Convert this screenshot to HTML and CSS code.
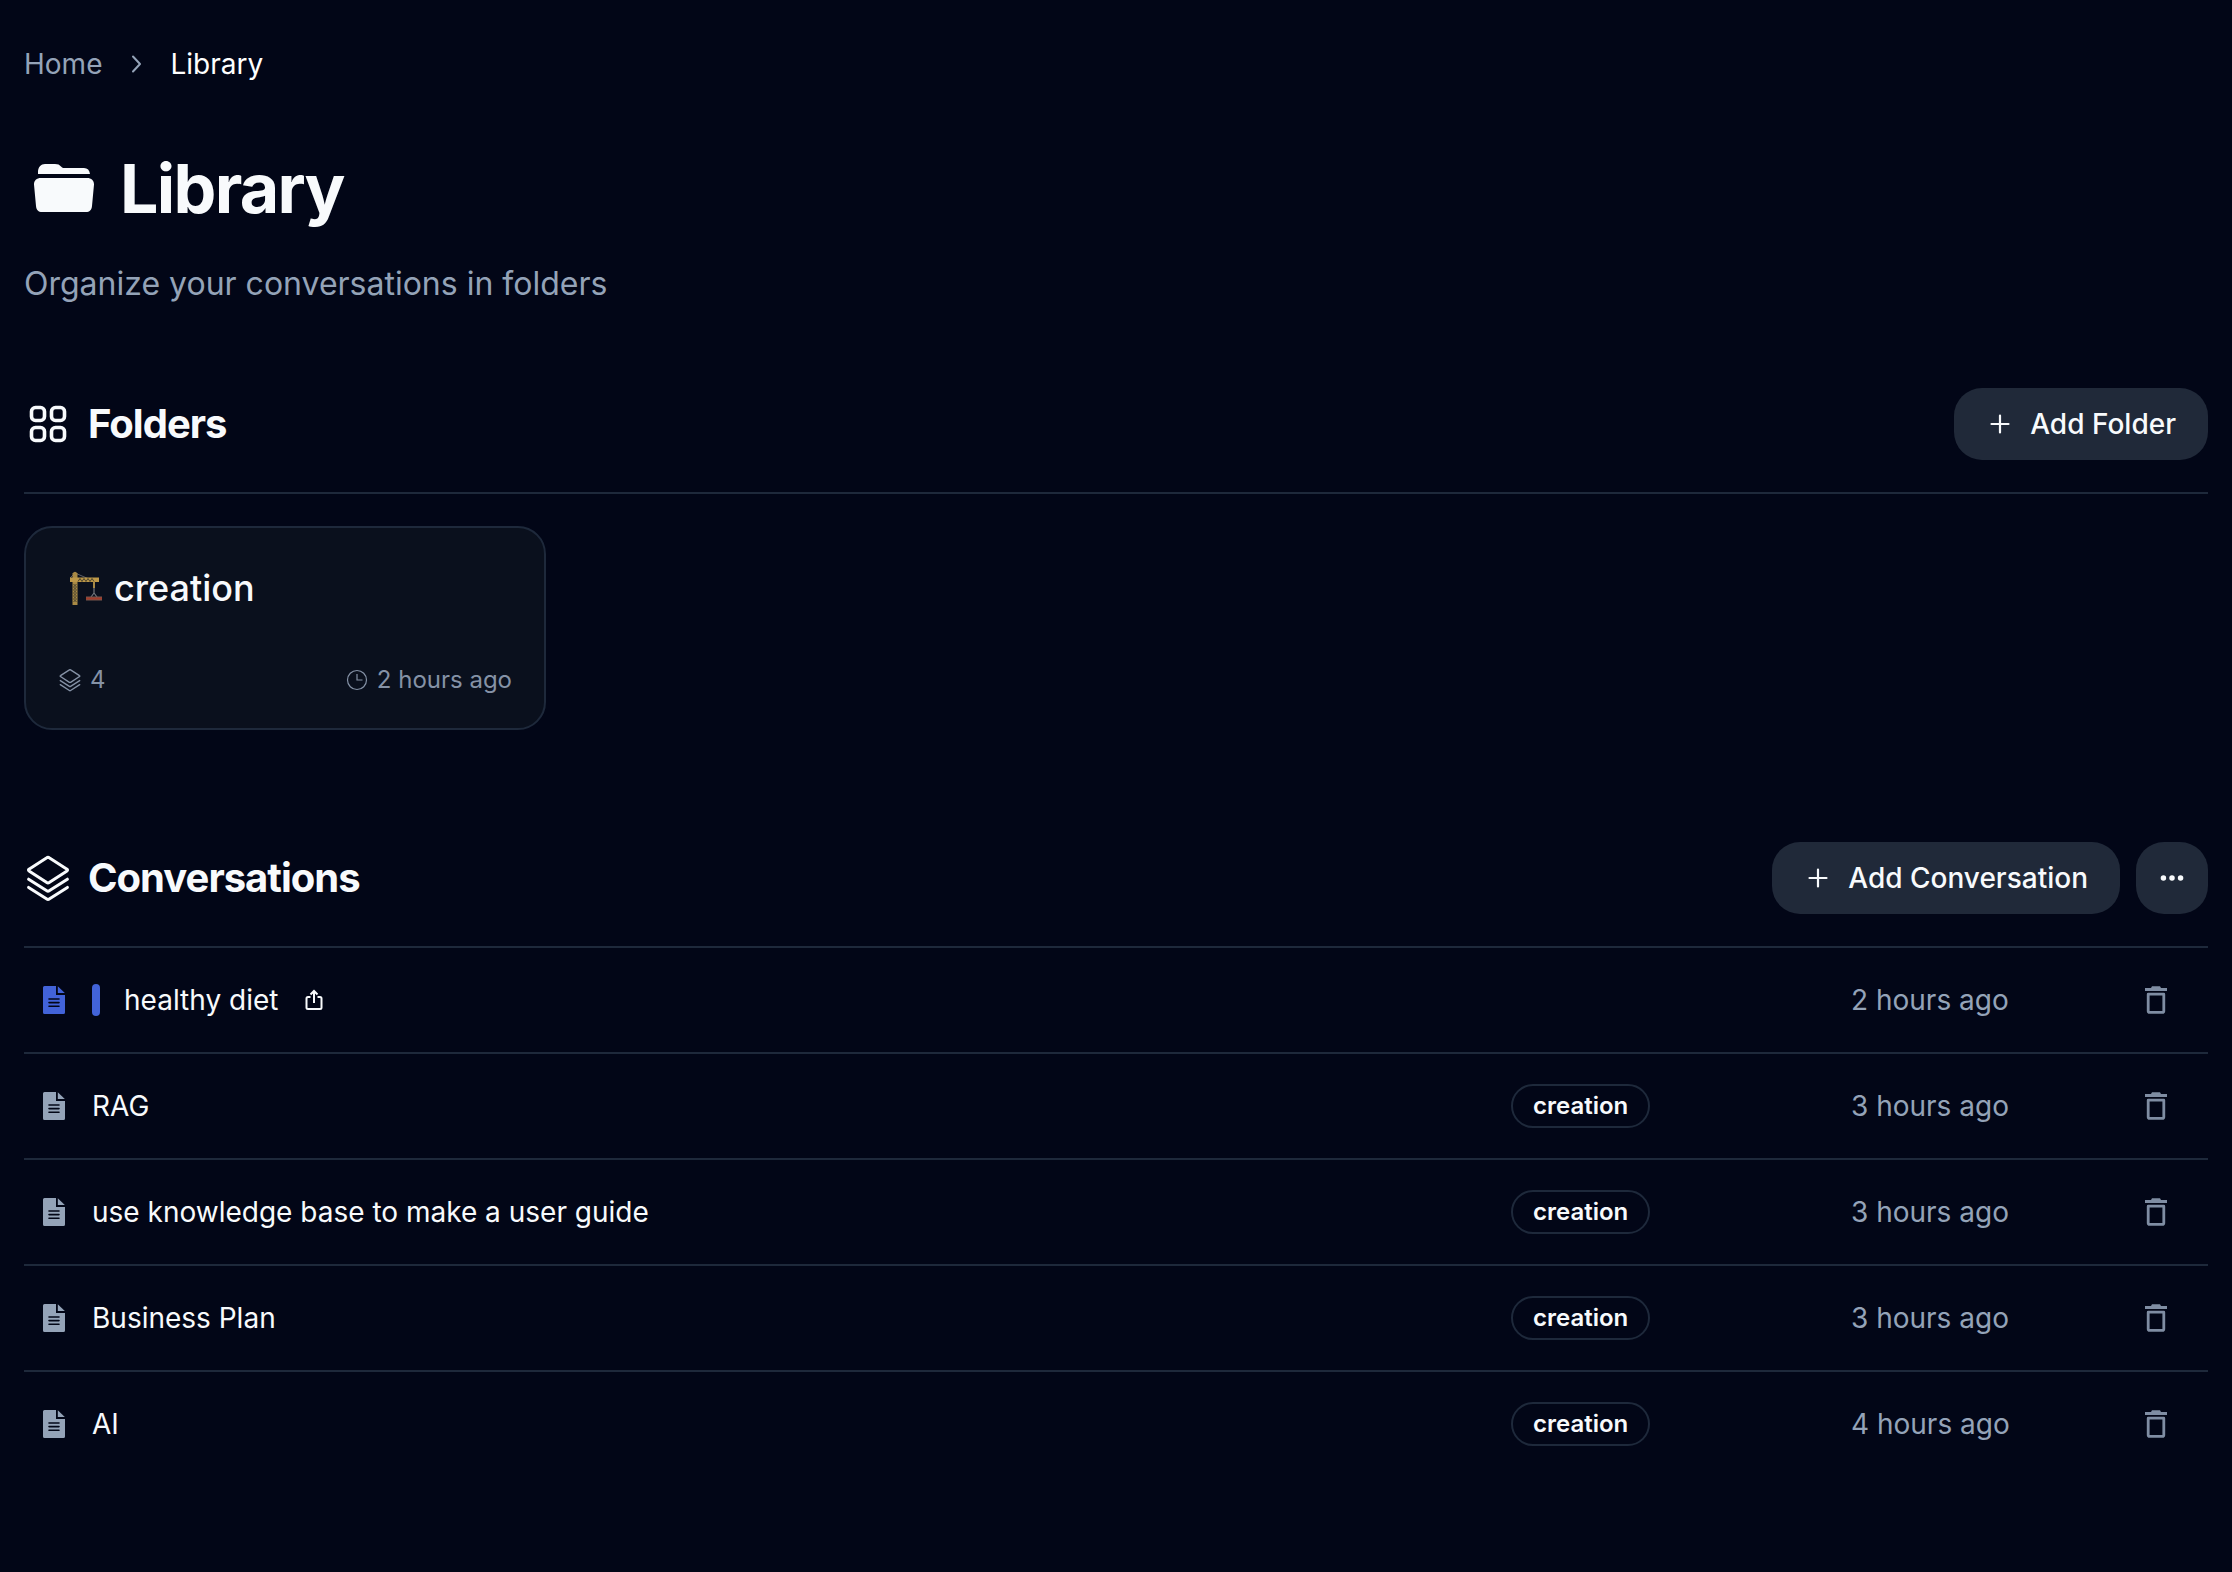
FILE: index.html
```html
<!DOCTYPE html>
<html lang="en">
<head>
<meta charset="utf-8">
<meta name="viewport" content="width=device-width, initial-scale=1">
<title>Library</title>
<link rel="stylesheet" href="styles.css">
</head>
<body>
<svg class="sprite" aria-hidden="true">
  <symbol id="layers" viewBox="0 0 48 48">
    <g fill="none" stroke="currentColor" stroke-linecap="round" stroke-linejoin="round">
      <path d="M22.8 3.8a2 2 0 0 1 2.4 0L43 15.2a1 1 0 0 1 0 1.8L25.2 28.6a2 2 0 0 1-2.4 0L5 17a1 1 0 0 1 0-1.8z"/>
      <path d="M4.600 25.200 22.800 36.800a2 2 0 0 0 2.400 0L43.400 25.200"/>
      <path d="M4.600 33.400 22.800 45a2 2 0 0 0 2.400 0L43.400 33.400"/>
    </g>
  </symbol>
  <symbol id="plus" viewBox="0 0 28 28">
    <path d="M14 5.500v17M5.500 14h17" fill="none" stroke="currentColor" stroke-width="2.200" stroke-linecap="round"/>
  </symbol>
  <symbol id="file" viewBox="0 0 28 28">
    <path fill="currentColor" fill-rule="evenodd" d="M4.500 0H16v9h9v17.500a1.500 1.500 0 0 1-1.500 1.500h-19A1.500 1.500 0 0 1 3 26.500v-25A1.500 1.500 0 0 1 4.500 0zM9 12.200a.8.8 0 0 0 0 1.600h10a.8.8 0 0 0 0-1.600zm0 3.600a.8.8 0 0 0 0 1.600h10a.8.8 0 0 0 0-1.600zm0 3.600a.8.8 0 0 0 0 1.600h10a.8.8 0 0 0 0-1.600z"/>
    <path fill="currentColor" d="M17.800.2 24.800 7h-7z"/>
  </symbol>
  <symbol id="trash" viewBox="0 0 28 28">
    <path fill="currentColor" d="M3 2h6l1-1.800h8L19 2h6v3H3z"/>
    <path fill="none" stroke="currentColor" stroke-width="2.800" stroke-linejoin="round" d="M6.200 8.200h15.600v16.700a1.400 1.400 0 0 1-1.400 1.400H7.600a1.400 1.400 0 0 1-1.400-1.400z"/>
  </symbol>
</svg>

<main class="page">
  <nav class="breadcrumb" aria-label="Breadcrumb">
    <a href="#home">Home</a>
    <svg class="icon-sm" viewBox="0 0 28 28" aria-hidden="true"><path d="M11 6.500l7 7.500-7 7.500" fill="none" stroke="currentColor" stroke-width="2" stroke-linecap="round" stroke-linejoin="round"/></svg>
    <span class="current" aria-current="page">Library</span>
  </nav>

  <header class="hero">
    <h1 class="title">
      <svg class="title-icon" viewBox="0 0 80 80" aria-hidden="true">
        <path fill="currentColor" d="M14 26v-2c0-5 3-8 7-8h10c3 0 4.500.8 6 2.500 1.200 1.300 1.800 1.500 3.500 1.500H60c3.500 0 5.500 2 6 6zM17 30h46c4.500 0 7 2.500 7 6.500L68 58c-.4 4-2.500 6-6 6H18c-3.500 0-5.600-2-6-6l-2-21.500c0-4 2.500-6.500 7-6.500z"/>
      </svg>
      Library
    </h1>
    <p class="subtitle">Organize your conversations in folders</p>
  </header>

  <section class="section">
    <div class="section-head">
      <h2 class="section-title">
        <svg class="section-icon" viewBox="0 0 48 48" aria-hidden="true">
          <g fill="none" stroke="currentColor" stroke-width="3.600">
            <rect x="7.500" y="7.500" width="13" height="13" rx="4"/><rect x="27.500" y="7.500" width="13" height="13" rx="4"/>
            <rect x="7.500" y="27.500" width="13" height="13" rx="4"/><rect x="27.500" y="27.500" width="13" height="13" rx="4"/>
          </g>
        </svg>
        Folders
      </h2>
      <button class="btn" type="button"><svg class="icon-sm" aria-hidden="true"><use href="#plus"/></svg>Add Folder</button>
    </div>
    <div class="folder-grid">
      <article class="card">
        <h3 class="card-title">
          <svg class="crane" viewBox="0 0 36 36" aria-hidden="true">
            <path d="M4 8 9 3l14 6M9 3v6" fill="none" stroke="#5c5f66" stroke-width="1"/>
            <path d="M6.500 3.500Q9 0 11.500 3.500V35h-5z" fill="#a98a45"/>
            <path d="M4 7.500h29V12H4z" fill="#bd9848"/>
            <path d="M7.500 14l3 3-3 3 3 3-3 3 3 3-3 3M10.500 14l-3 3 3 3-3 3 3 3-3 3 3 3M12 11.500l2-3 2 3 2-3 2 3 2-3 2 3 2-3 2 3" fill="none" stroke="#4b442f" stroke-width="1"/>
            <path d="M28 12v6" stroke="#a98a45" stroke-width="2"/>
            <path d="M28 18v5M28 23l-3 4M28 23l3 4" fill="none" stroke="#73767c" stroke-width="1.200"/>
            <path d="M20 27h16v3H20z" fill="#a23d2b"/><path d="M20 27h16M20 30h16" stroke="#77564e" stroke-width="1"/>
          </svg>
          creation
        </h3>
        <div class="card-meta">
          <span class="meta"><svg class="meta-icon layers-sm" aria-hidden="true"><use href="#layers"/></svg>4</span>
          <span class="meta"><svg class="meta-icon" viewBox="0 0 24 24" aria-hidden="true"><g fill="none" stroke="currentColor" stroke-width="1.200"><circle cx="12" cy="12" r="9.500"/><path d="M12 6v6h5.500"/></g></svg>2 hours ago</span>
        </div>
      </article>
    </div>
  </section>

  <section class="section conversations">
    <div class="section-head">
      <h2 class="section-title"><svg class="section-icon layers-lg" aria-hidden="true"><use href="#layers"/></svg>Conversations</h2>
      <div class="actions">
        <button class="btn" type="button"><svg class="icon-sm" aria-hidden="true"><use href="#plus"/></svg>Add Conversation</button>
        <button class="btn btn-square" type="button" aria-label="More actions"><svg class="icon-sm" viewBox="0 0 28 28" aria-hidden="true"><g fill="currentColor"><circle cx="4" cy="14" r="3.200"/><circle cx="14" cy="14" r="3.200"/><circle cx="24" cy="14" r="3.200"/></g></svg></button>
      </div>
    </div>
    <table class="list">
      <colgroup><col class="col-icon"><col><col class="col-tag"><col class="col-time"><col class="col-delete"></colgroup>
      <tbody>
        <tr>
          <td class="cell-icon active"><svg class="icon-sm" aria-hidden="true"><use href="#file"/></svg></td>
          <td><div class="name"><span class="bar"></span><a href="#healthy-diet">healthy diet</a><svg class="share" viewBox="0 0 24 24" aria-hidden="true"><path d="M8.500 9H6a1.500 1.500 0 0 0-1.500 1.500v9A1.500 1.500 0 0 0 6 21h12a1.500 1.500 0 0 0 1.500-1.500v-9A1.500 1.500 0 0 0 18 9h-2.500M12 15V3.500M8.500 6.500 12 3l3.500 3.500" fill="none" stroke="currentColor" stroke-width="2"/></svg></div></td>
          <td></td>
          <td class="time">2 hours ago</td>
          <td class="cell-delete"><button class="delete" type="button" aria-label="Delete healthy diet"><svg class="icon-sm" aria-hidden="true"><use href="#trash"/></svg></button></td>
        </tr>
        <tr>
          <td class="cell-icon"><svg class="icon-sm" aria-hidden="true"><use href="#file"/></svg></td>
          <td><div class="name"><a href="#rag">RAG</a></div></td>
          <td><span class="tag">creation</span></td>
          <td class="time">3 hours ago</td>
          <td class="cell-delete"><button class="delete" type="button" aria-label="Delete RAG"><svg class="icon-sm" aria-hidden="true"><use href="#trash"/></svg></button></td>
        </tr>
        <tr>
          <td class="cell-icon"><svg class="icon-sm" aria-hidden="true"><use href="#file"/></svg></td>
          <td><div class="name"><a href="#user-guide">use knowledge base to make a user guide</a></div></td>
          <td><span class="tag">creation</span></td>
          <td class="time">3 hours ago</td>
          <td class="cell-delete"><button class="delete" type="button" aria-label="Delete use knowledge base to make a user guide"><svg class="icon-sm" aria-hidden="true"><use href="#trash"/></svg></button></td>
        </tr>
        <tr>
          <td class="cell-icon"><svg class="icon-sm" aria-hidden="true"><use href="#file"/></svg></td>
          <td><div class="name"><a href="#business-plan">Business Plan</a></div></td>
          <td><span class="tag">creation</span></td>
          <td class="time">3 hours ago</td>
          <td class="cell-delete"><button class="delete" type="button" aria-label="Delete Business Plan"><svg class="icon-sm" aria-hidden="true"><use href="#trash"/></svg></button></td>
        </tr>
        <tr>
          <td class="cell-icon"><svg class="icon-sm" aria-hidden="true"><use href="#file"/></svg></td>
          <td><div class="name"><a href="#ai">AI</a></div></td>
          <td><span class="tag">creation</span></td>
          <td class="time">4 hours ago</td>
          <td class="cell-delete"><button class="delete" type="button" aria-label="Delete AI"><svg class="icon-sm" aria-hidden="true"><use href="#trash"/></svg></button></td>
        </tr>
      </tbody>
    </table>
  </section>
</main>
</body>
</html>
```
FILE: styles.css
```css
:root {
  --bg: #020617;
  --text: #f8fafc;
  --muted: #94a3b8;
  --line: #1e293b;
  --surface: #202939;
  --accent: #4263d9;
}

* { box-sizing: border-box; }

body {
  margin: 0;
  min-height: 100vh;
  background: var(--bg);
  color: var(--text);
  font-family: Inter, "Liberation Sans", sans-serif;
  font-size: 28px;
  line-height: 40px;
}

h1, h2, h3, p { margin: 0; }
a { color: inherit; text-decoration: none; }
svg { display: block; flex: none; }
button { font: inherit; color: inherit; border: 0; cursor: pointer; }

.sprite { position: absolute; width: 0; height: 0; }
.icon-sm { width: 28px; height: 28px; }

.page { padding: 44px 24px 96px; }

.breadcrumb {
  display: flex;
  align-items: center;
  gap: 20px;
  color: var(--muted);
}
.current { color: #fff; }

.hero { margin: 64px 0 80px; }
.title {
  display: flex;
  align-items: center;
  gap: 16px;
  font-size: 68px;
  line-height: 80px;
  font-weight: 700;
  letter-spacing: -0.025em;
}
.title-icon { width: 80px; height: 80px; }
.subtitle {
  margin-top: 32px;
  font-size: 32px;
  line-height: 48px;
  color: var(--muted);
}

.section-head {
  display: flex;
  align-items: center;
  justify-content: space-between;
  padding-bottom: 32px;
  border-bottom: 2px solid var(--line);
}
.section-title {
  display: flex;
  align-items: center;
  gap: 16px;
  font-size: 40px;
  line-height: 48px;
  font-weight: 700;
  letter-spacing: -0.025em;
}
.section-icon { width: 48px; height: 48px; }
.layers-lg { stroke-width: 3; }
.actions { display: flex; gap: 16px; }

.btn {
  display: flex;
  align-items: center;
  justify-content: center;
  gap: 16px;
  height: 72px;
  padding: 0 32px;
  border-radius: 28px;
  background: var(--surface);
  font-weight: 500;
}
.btn-square { width: 72px; padding: 0; }
.btn-square svg { width: 24px; height: 24px; }

.folder-grid {
  display: grid;
  grid-template-columns: repeat(4, 1fr);
  gap: 32px;
  margin-top: 32px;
}
.card {
  padding: 32px;
  border: 2px solid var(--line);
  border-radius: 28px;
  background: #0a101d;
}
.card-title {
  display: flex;
  align-items: center;
  gap: 12px;
  padding: 8px;
  font-size: 36px;
  line-height: 40px;
  font-weight: 500;
}
.crane { width: 36px; height: 36px; }
.card-meta {
  display: flex;
  justify-content: space-between;
  margin-top: 48px;
  font-size: 24px;
  line-height: 32px;
  color: #8592a6;
}
.meta { display: flex; align-items: center; gap: 8px; }
.meta-icon { width: 24px; height: 24px; }
.layers-sm { stroke-width: 2.8; }

.conversations { margin-top: 112px; }
.list {
  width: 100%;
  table-layout: fixed;
  border-collapse: separate;
  border-spacing: 0;
}
.list td {
  height: 106px;
  padding: 0;
  vertical-align: middle;
  border-bottom: 2px solid var(--line);
}
.list tr:last-child td { border-bottom-color: transparent; }
.col-icon { width: 68px; }
.col-tag { width: 340px; }
.col-time { width: 253px; }
.col-delete { width: 104px; }
.list .cell-icon { padding-left: 16px; color: var(--muted); }
.list .cell-icon.active { color: var(--accent); }
.name { display: flex; align-items: center; gap: 24px; }
.bar { width: 8px; height: 32px; border-radius: 4px; background: var(--accent); }
.share { width: 24px; height: 24px; }
.tag {
  display: inline-block;
  padding: 0 20px;
  border: 2px solid var(--line);
  border-radius: 22px;
  font-size: 24px;
  line-height: 40px;
  font-weight: 600;
  vertical-align: middle;
}
.time { color: var(--muted); }
.delete {
  display: block;
  margin: 0 auto;
  padding: 0;
  background: none;
  color: #7f8da3;
}
```
